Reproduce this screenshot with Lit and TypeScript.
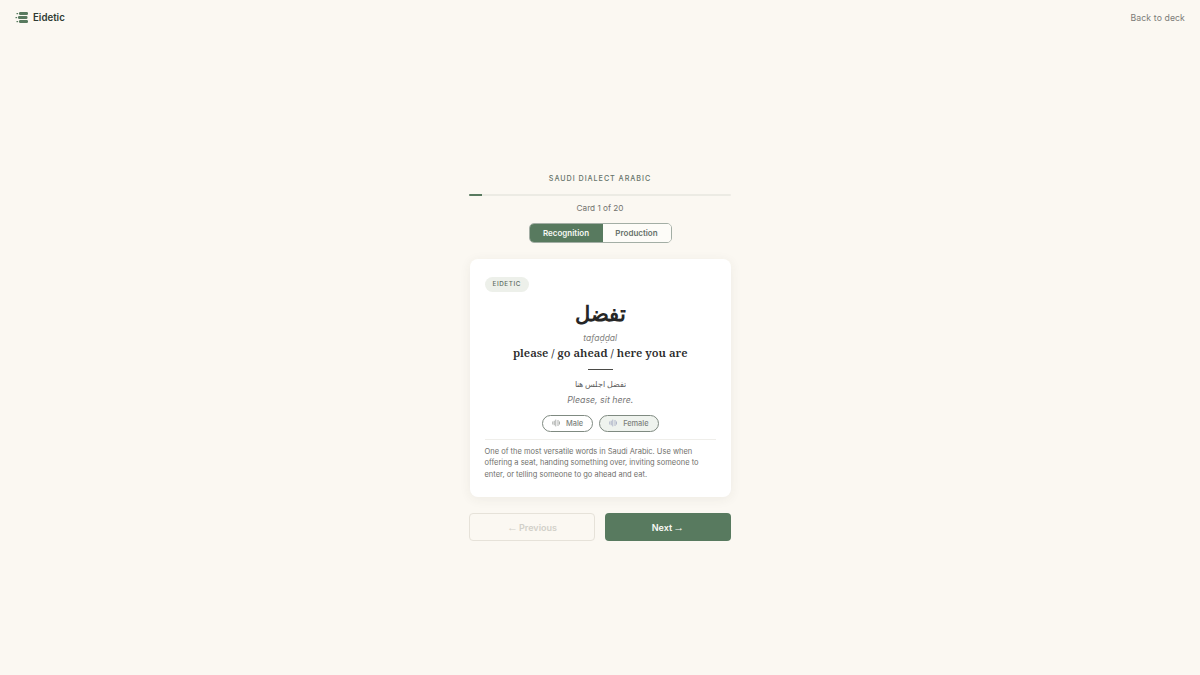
import { LitElement, html, css, svg } from "lit";
import { customElement } from "lit/decorators.js";

const speaker = svg`<svg class="spk" viewBox="0 0 12 10" width="9" height="8" aria-hidden="true"><path d="M1 3.5v3M3 2.5v5M5 1v8M8 1.5v7M10 3.5v3" fill="none" stroke="currentColor" stroke-width="1.2" stroke-linecap="round"/></svg>`;

@customElement("app-root")
export class AppRoot extends LitElement {
  static styles = css`
    :host { display: flex; flex-direction: column; min-height: 675px; background: #fbf8f2; font-family: Inter, "Noto Sans", sans-serif; color: #2b2b2b; box-sizing: border-box; }
    header { height: 35px; display: flex; align-items: center; justify-content: space-between; padding: 0 15px 0 15px; flex: none; }
    .brand { display: flex; align-items: center; gap: 5px; font-size: 9.7px; font-weight: 600; color: #2f3a33; }
    .back { font-size: 8.7px; color: #7c7c78; letter-spacing: .1px; }
    main { flex: 1; display: flex; flex-direction: column; align-items: center; justify-content: center; padding-top: 4px; }
    .col { width: 262px; display: flex; flex-direction: column; align-items: center; }
    .deck { font-size: 7.2px; font-weight: 500; letter-spacing: .95px; color: #66736a; line-height: 12px; }
    .track { align-self: stretch; height: 2px; background: #ecebe4; margin-top: 9px; border-radius: 1px; overflow: hidden; }
    .fill { height: 100%; background: #587a5f; }
    .count { font-size: 8.2px; color: #73736f; margin-top: 6px; line-height: 12px; }
    .modes { display: flex; margin-top: 9px; border: 1px solid #a3aea5; border-radius: 5px; overflow: hidden; height: 18px; box-sizing: content-box; }
    .mode { width: 68px; display: flex; align-items: center; justify-content: center; font-size: 8px; font-weight: 600; color: #66716a; background: #fdfcf8; }
    .mode.on { width: 73px; background: #587a5f; color: #f6f8f4; }
    .card { align-self: stretch; margin: 16px 0 16px 1px; background: #fff; border-radius: 8px; box-shadow: 0 2px 12px rgba(60, 60, 40, .07); padding: 18px 15px 17px 14.5px; display: flex; flex-direction: column; align-items: center; }
    .tag { align-self: flex-start; font-size: 6.3px; font-weight: 500; letter-spacing: .6px; color: #5f6e63; background: #edf0ea; border-radius: 8px; padding: 0 8px; line-height: 15px; }
    .word { font-family: Inter, sans-serif; font-size: 21px; font-weight: 700; color: #262626; line-height: 36px; margin-top: 4px; }
    .tr { font-size: 8.5px; font-style: italic; color: #81817d; line-height: 12px; margin-top: 0; }
    .mean { font-family: "Noto Serif", "serif", serif; font-size: 11.3px; font-weight: 600; color: #2a2a2a; line-height: 18px; }
    .rule { width: 25px; height: 1px; background: #4a4a46; margin-top: 7px; }
    .ex { font-family: Inter, sans-serif; font-size: 7.6px; color: #5c5c5c; line-height: 14px; margin-top: 8px; opacity: .99; }
    .ext { font-size: 8.8px; font-style: italic; color: #777; line-height: 14px; margin-top: 1px; }
    .audio { display: flex; gap: 6px; margin-top: 8px; }
    .pill { display: flex; align-items: center; gap: 5px; height: 15px; padding: 0 9px; border: 1px solid #7f8a81; border-radius: 9px; font-size: 7.4px; font-weight: 500; color: #7b7f7b; background: #fff; }
    .pill.f { background: #eff3ee; }
    .spk { color: #a3a6a3; }
    .f .spk { color: #a9b0c4; }
    .notes { align-self: stretch; border-top: 1px solid #efeeea; margin-top: 7px; padding-top: 6px; font-size: 7.5px; line-height: 11.4px; color: #6f6f6b; }
    .nav { align-self: stretch; display: grid; grid-template-columns: 1fr 1fr; gap: 10px; }
    .btn { height: 28px; border-radius: 4px; display: flex; align-items: center; justify-content: center; gap: 1px; font-size: 9px; font-weight: 600; box-sizing: border-box; }
    .arrow { font-family: "Liberation Sans", sans-serif; font-weight: 400; font-size: 11px; }
    .prev { border: 1px solid #e6e2d9; color: #d2d0c9; }
    .next { background: #587a5f; color: #f8f9f5; }
  `;

  render() {
    return html`
      <header>
        <div class="brand">
          <svg width="13" height="11" viewBox="0 0 13 11" aria-hidden="true"><g fill="#587a5f"><rect x="4" y="0" width="9" height="3" rx="1.2"/><rect x="3" y="4" width="9.5" height="3" rx="1.2"/><rect x="4" y="8" width="9" height="3" rx="1.2"/><rect x="1.5" y="1" width="1.6" height="1.2"/><rect x="0.5" y="5" width="1.6" height="1.2"/><rect x="1.5" y="9" width="1.6" height="1.2"/></g></svg>
          <span>Eidetic</span>
        </div>
        <div class="back">Back to deck</div>
      </header>
      <main>
        <div class="col">
          <div class="deck">SAUDI DIALECT ARABIC</div>
          <div class="track"><div class="fill" style="width: 5%"></div></div>
          <div class="count">Card 1 of 20</div>
          <div class="modes"><div class="mode on">Recognition</div><div class="mode">Production</div></div>
          <section class="card">
            <div class="tag">EIDETIC</div>
            <div class="word" lang="ar" dir="rtl">تفضل</div>
            <div class="tr">tafaḍḍal</div>
            <div class="mean">please / go ahead / here you are</div>
            <div class="rule"></div>
            <div class="ex" lang="ar" dir="rtl">تفضل اجلس هنا</div>
            <div class="ext">Please, sit here.</div>
            <div class="audio">
              <div class="pill">${speaker}Male</div>
              <div class="pill f">${speaker}Female</div>
            </div>
            <div class="notes">One of the most versatile words in Saudi Arabic. Use when offering a seat, handing something over, inviting someone to enter, or telling someone to go ahead and eat.</div>
          </section>
          <div class="nav">
            <div class="btn prev"><span class="arrow">←</span><span>Previous</span></div>
            <div class="btn next"><span>Next</span><span class="arrow">→</span></div>
          </div>
        </div>
      </main>
    `;
  }
}
